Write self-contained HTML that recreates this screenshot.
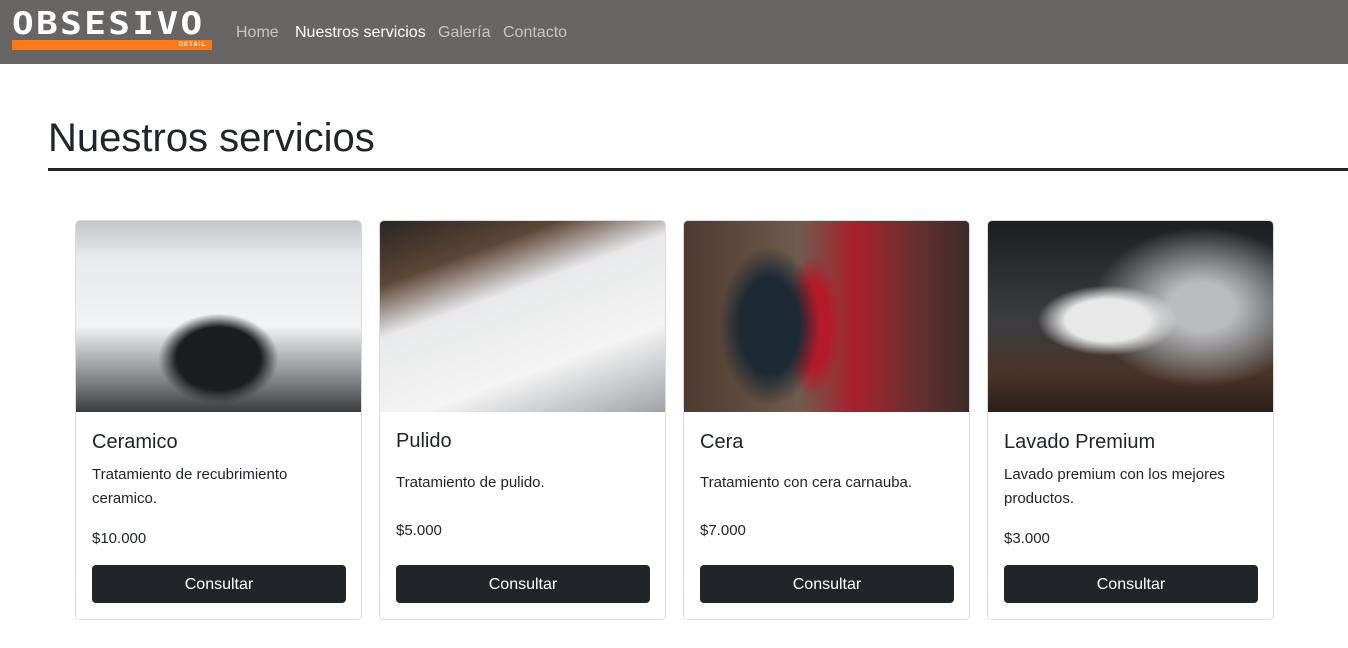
<!DOCTYPE html>
<html><head><meta charset="utf-8"><style>
*{box-sizing:border-box;margin:0;padding:0}
body{width:1348px;height:648px;background:#fff;font-family:"Segoe UI","Liberation Sans",sans-serif;color:#212529;position:relative;overflow:hidden}
nav{position:absolute;left:0;top:0;width:1348px;height:64px;background:#686664}
.logo{position:absolute;left:12px;top:13px;width:200px;height:38px}
.logo .t{position:absolute;left:0;top:0;height:22px;font-family:"DejaVu Sans Mono","Liberation Mono",monospace;font-weight:bold;font-size:30px;line-height:22px;color:#fff;letter-spacing:2px;transform-origin:0 0;transform:scale(1.2,1.05);white-space:nowrap}
.logo .b{position:absolute;left:0;top:27px;width:200px;height:10px;background:#ff7a16;color:#fff;font-size:6px;font-weight:bold;text-align:right;padding-right:6px;line-height:10px;letter-spacing:1px}
.nl{position:absolute;top:24px;font-size:16px;color:#c8c6c4}
h1{position:absolute;left:48px;top:113px;font-size:40px;font-weight:500;line-height:50px}
.rule{position:absolute;left:48px;top:168px;width:1300px;height:3px;background:#212529}
.card{position:absolute;top:220px;width:287px;height:400px;border:1px solid #dcdcdc;border-radius:5px;overflow:hidden}
.img{height:191px}
.card h5{position:absolute;left:16px;font-size:20px;font-weight:500}
.card p{position:absolute;left:16px;width:260px;font-size:15px;line-height:24px}
.btn{position:absolute;left:16px;top:344px;width:254px;height:38px;background:#212529;color:#fff;border-radius:4px;text-align:center;line-height:40px;font-size:16px}
</style></head><body>
<nav>
<div class="logo"><div class="t">OBSESIVO</div><div class="b">DETAIL</div></div>
<span class="nl" style="left:236px">Home</span>
<span class="nl" style="left:295px;color:#fff">Nuestros servicios</span>
<span class="nl" style="left:438px">Galería</span>
<span class="nl" style="left:503px">Contacto</span>
</nav>
<h1>Nuestros servicios</h1>
<div class="rule"></div>

<div class="card" style="left:75px">
<div class="img" style="background:radial-gradient(ellipse 60px 45px at 50% 72%,#1c1d20 70%,transparent 100%),linear-gradient(#c4c6c9 0,#e9eaec 20%,#f2f3f4 55%,#7b7d80 85%,#3a3b3d 100%)"></div>
<h5 style="top:210px">Ceramico</h5>
<p style="top:242px">Tratamiento de recubrimiento ceramico.</p>
<p style="top:306px">$10.000</p>
<div class="btn">Consultar</div>
</div>

<div class="card" style="left:379px">
<div class="img" style="background:linear-gradient(160deg,#2a2622 0,#5d4636 22%,#e8e9ea 40%,#f4f4f4 70%,#9fa2a6 100%)"></div>
<h5 style="top:209px">Pulido</h5>
<p style="top:250px">Tratamiento de pulido.</p>
<p style="top:298px">$5.000</p>
<div class="btn">Consultar</div>
</div>

<div class="card" style="left:683px">
<div class="img" style="background:radial-gradient(ellipse 50px 80px at 30% 55%,#1d2a33 60%,transparent 100%),radial-gradient(ellipse 30px 70px at 45% 55%,#b51a2a 60%,transparent 100%),linear-gradient(90deg,#4d3a30 0,#6f5c4e 40%,#a8202c 60%,#6a3030 80%,#3b2b28 100%)"></div>
<h5 style="top:210px">Cera</h5>
<p style="top:250px">Tratamiento con cera carnauba.</p>
<p style="top:298px">$7.000</p>
<div class="btn">Consultar</div>
</div>

<div class="card" style="left:987px">
<div class="img" style="background:radial-gradient(ellipse 70px 35px at 42% 52%,#e8e8e8 60%,transparent 100%),radial-gradient(ellipse 110px 80px at 75% 45%,#b9bcbe 30%,transparent 100%),linear-gradient(#1c1e22 0,#3a3d40 50%,#4a3428 80%,#2a1e18 100%)"></div>
<h5 style="top:210px">Lavado Premium</h5>
<p style="top:242px">Lavado premium con los mejores productos.</p>
<p style="top:306px">$3.000</p>
<div class="btn">Consultar</div>
</div>
</body></html>
